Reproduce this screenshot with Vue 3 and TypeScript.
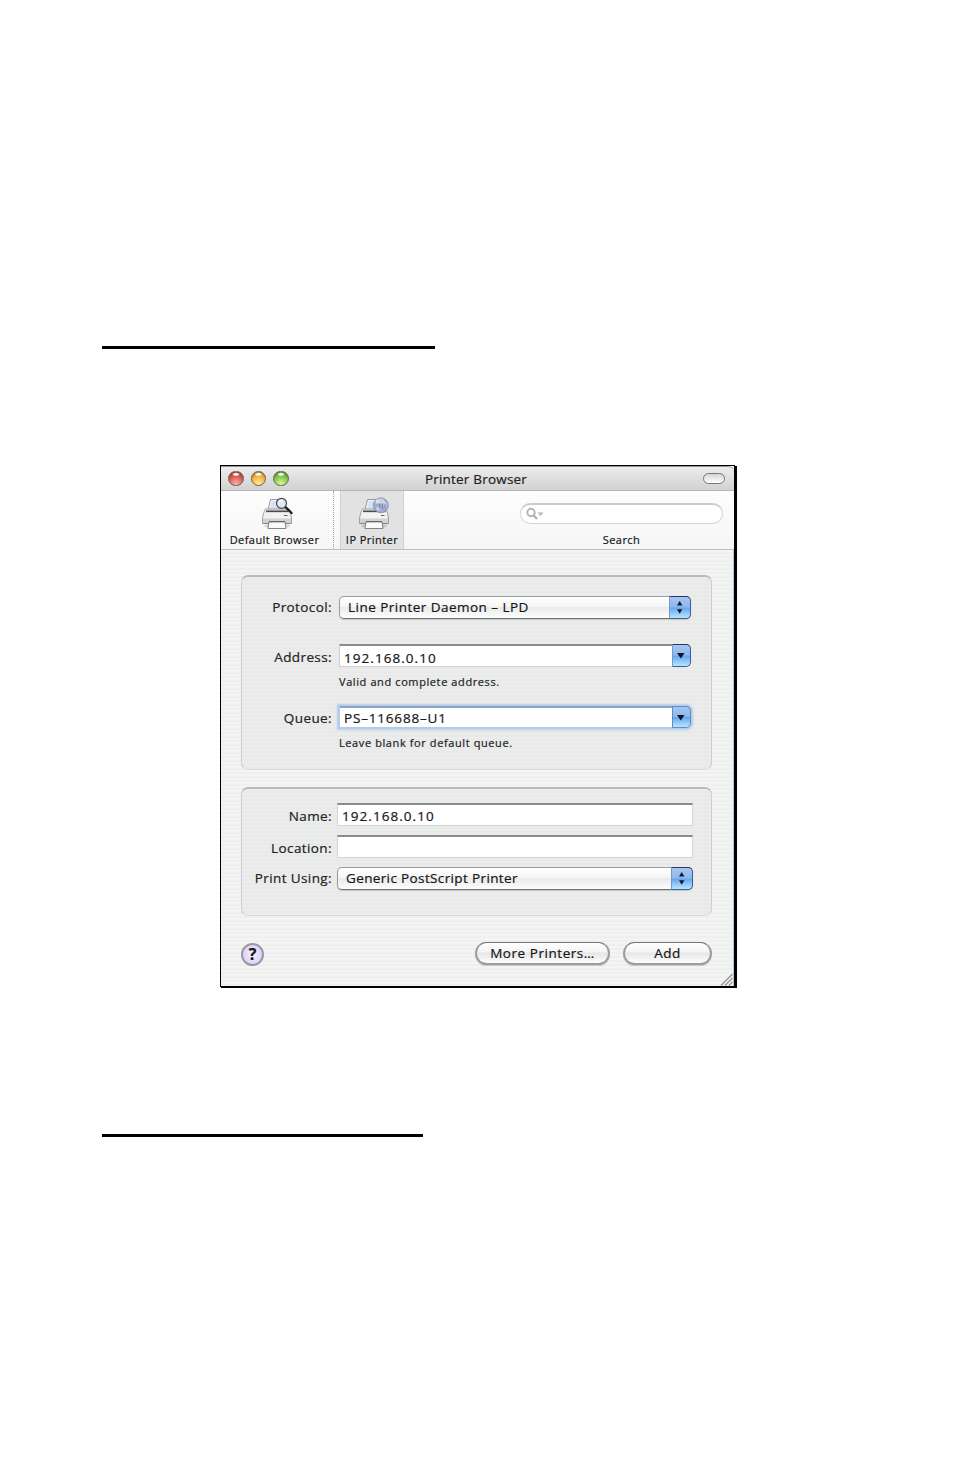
<script setup lang="ts">
interface Tool {
  label: string
  kind: 'search' | 'globe'
  active: boolean
}

const tools: Tool[] = [
  { label: 'Default Browser', kind: 'search', active: false },
  { label: 'IP Printer', kind: 'globe', active: true },
]
const lights = ['red', 'amber', 'green']
</script>

<template>
  <main class="page">
    <div class="rule rule-top"></div>

    <section class="window">
      <header class="titlebar">
        <div class="lights">
          <i v-for="c in lights" :key="c" class="light" :class="c"></i>
        </div>
        <h1 class="title">Printer Browser</h1>
        <i class="pill"></i>
      </header>

      <nav class="toolbar">
        <div v-for="t in tools" :key="t.kind" class="tool" :class="[t.kind, { active: t.active }]">
          <svg class="tool-icon" width="34" height="34" viewBox="0 0 34 34">
            <ellipse cx="17" cy="30" rx="13" ry="2.4" fill="#000" opacity=".13" />
            <path d="M8 14 10.5 3.5H24L25 15Z" fill="#eef3fc" stroke="#8b919b" stroke-width=".9" />
            <path d="M10 14 12 5H22L23 14Z" fill="#d6e1f6" />
            <path d="M4.5 14.5Q4.5 13 6.5 13H27.500Q29.500 13 30 15L31.500 22V27.500H2.500V22Z" fill="#f2f2f0" stroke="#8c8c8c" stroke-width=".8" />
            <path d="M6 15.300H28.500" stroke="#4a4c50" stroke-width="1.7" />
            <path d="M3 22.500H31V27Q31 28 29.500 28H4.500Q3 28 3 27Z" fill="#d2d2d0" />
            <path d="M3 27.500H31" stroke="#858585" stroke-width="1" />
            <path d="M9 25.500H25L26 32.500H8Z" fill="#fbfbfb" stroke="#777" stroke-width=".9" />
            <path d="M9 25.700H25" stroke="#666" stroke-width="1.300" />
            <path d="M24 19.500h3.500" stroke="#666" stroke-width="1" />
            <g v-if="t.kind === 'search'">
              <path d="M25.500 11 31.500 17" stroke="#1d1d1d" stroke-width="2.400" stroke-linecap="round" />
              <circle cx="21.500" cy="7.300" r="5" fill="#dfe7ee" fill-opacity=".9" stroke="#44484c" stroke-width="1.200" />
              <path d="M19 6.500Q20 4.300 22.500 4.500" fill="none" stroke="#fff" stroke-width="1.300" />
            </g>
            <g v-else>
              <circle cx="23.800" cy="9.300" r="7.500" fill="#a3acd0" stroke="#8088a8" stroke-width=".7" />
              <path d="M18 7Q19 4 22 4Q22 7 19.500 8ZM19 12Q21 9 23 12L22 15Q19.500 14.500 19 12ZM26 5Q29 5 30 8L29 12L26.500 10Z" fill="#dde2f3" opacity=".6" />
              <ellipse cx="23" cy="5" rx="4.500" ry="2.500" fill="#fff" opacity=".45" />
              <path d="M22.500 8v4M25.500 8v5M28 8v4" stroke="#7b85ad" stroke-width="1" />
            </g>
          </svg>
          <span class="tool-label">{{ t.label }}</span>
        </div>
        <div class="search-item">
          <div class="search-box">
            <svg width="22" height="14" viewBox="0 0 22 14">
              <circle cx="6" cy="5.500" r="3.700" fill="none" stroke="#b3b5b5" stroke-width="1.900" />
              <path d="M8.800 8.500 12 12" stroke="#b3b5b5" stroke-width="2.400" />
              <path d="M12.500 5.500h6l-3 3.500Z" fill="#b3b5b5" />
            </svg>
          </div>
          <span class="tool-label">Search</span>
        </div>
      </nav>

      <div class="body">
        <div class="group first">
          <div class="row r-protocol">
            <label>Protocol:</label>
            <div class="popup"><span class="t-lpd">Line Printer Daemon – LPD</span>
              <i class="cap"><svg width="22" height="23" viewBox="0 0 22 23"><path d="M8 9.500 10.700 5l2.700 4.500ZM8 13.300h5.400l-2.700 4.500Z" fill="#10182c" /></svg></i>
            </div>
          </div>
          <div class="row r-address">
            <label>Address:</label>
            <div class="combo"><span class="t-ip">192.168.0.10</span>
              <i class="cap"><svg width="19" height="23" viewBox="0 0 19 23"><path d="M5 9h7.500L8.800 14.500Z" fill="#0c1428" /></svg></i>
            </div>
          </div>
          <p class="hint">Valid and complete address.</p>
          <div class="row r-queue">
            <label>Queue:</label>
            <div class="combo focus"><span class="t-ps">PS–116688–U1</span>
              <i class="cap"><svg width="19" height="22" viewBox="0 0 19 22"><path d="M5 9h7.500L8.800 14.500Z" fill="#0c1428" /></svg></i>
            </div>
          </div>
          <p class="hint">Leave blank for default queue.</p>
        </div>

        <div class="group second">
          <div class="row r-name">
            <label>Name:</label>
            <div class="field"><span class="t-ip">192.168.0.10</span></div>
          </div>
          <div class="row r-location">
            <label>Location:</label>
            <div class="field"></div>
          </div>
          <div class="row r-using">
            <label>Print Using:</label>
            <div class="popup"><span class="t-generic">Generic PostScript Printer</span>
              <i class="cap"><svg width="22" height="23" viewBox="0 0 22 23"><path d="M8 9.500 10.700 5l2.700 4.500ZM8 13.300h5.400l-2.700 4.500Z" fill="#10182c" /></svg></i>
            </div>
          </div>
        </div>

        <footer class="footer">
          <button class="help">?</button>
          <button class="btn more"><span>More Printers…</span></button>
          <button class="btn add"><span>Add</span></button>
        </footer>
        <svg class="grip" width="14" height="13" viewBox="0 0 14 13">
          <path d="M1 12.500 12.500 1M5 12.500 12.500 5M9 12.500 12.500 9" stroke="#8e908f" stroke-width="1.100" />
        </svg>
      </div>
    </section>

    <div class="rule rule-bottom"></div>
  </main>
</template>

<style>
body {
  background: #fff;
}
</style>

<style scoped>
.page {
  box-sizing: border-box;
  width: 954px;
  height: 1475px;
  padding-top: 346px;
  overflow: hidden;
  font-family: 'Open Sans', 'Noto Sans', sans-serif;
  font-size: 13.5px;
  color: #222;
  -webkit-text-stroke: 0.2px currentColor;
}
.page * {
  box-sizing: border-box;
}
.rule {
  height: 3px;
  margin-left: 102px;
  background: #000;
}
.rule-top {
  width: 333px;
}
.rule-bottom {
  width: 321px;
  margin-top: 147px;
}
.window {
  display: flex;
  flex-direction: column;
  width: 515px;
  height: 522px;
  margin: 116px 0 0 220px;
  border: 1px solid #000;
  box-shadow: 1px 1px 0 #000, 2px 1px 0 #000;
  background: #f1f2f1;
}
.titlebar {
  display: flex;
  align-items: center;
  justify-content: space-between;
  height: 25px;
  padding: 0 9px 0 7px;
  border-bottom: 1px solid #b4b5b4;
  border-top: 1px solid #8f9798;
  border-top-right-radius: 6px;
  background: linear-gradient(#ecedec, #d0d1d0);
}
.lights {
  display: flex;
  gap: 7px;
  width: 70px;
}
.light {
  width: 15.5px;
  height: 15.5px;
  border-radius: 50%;
  border: 1px solid #6b5f55;
}
.red {
  background: radial-gradient(ellipse 4px 2px at 50% 18%, #fff 40%, transparent), radial-gradient(circle at 50% 90%, #f7b5ac, #d8504b 60%, #8e2221);
}
.amber {
  background: radial-gradient(ellipse 4px 2px at 50% 18%, #fff 40%, transparent), radial-gradient(circle at 50% 90%, #fff09a, #f0ac3c 60%, #a55d0e);
}
.green {
  background: radial-gradient(ellipse 4px 2px at 50% 18%, #fff 40%, transparent), radial-gradient(circle at 50% 90%, #dcfa9a, #78c044 60%, #377010);
}
.title {
  margin: 0 0 0 -1px;
  font-size: 13.5px;
  font-weight: 400;
  line-height: 22px;
  letter-spacing: 0.2px;
  white-space: nowrap;
}
.pill {
  width: 22px;
  height: 11px;
  margin-left: 48px;
  border: 1.5px solid #747776;
  border-radius: 6px;
  background: linear-gradient(#d4d5d5, #fff);
}
.toolbar {
  display: flex;
  height: 59px;
  border-bottom: 1px solid #bdbfbd;
  background: linear-gradient(#fcfdfc, #f5f6f5);
}
.tool {
  display: flex;
  flex-direction: column;
  align-items: center;
  white-space: nowrap;
}
.tool.search {
  width: 113px;
  padding-right: 5px;
  border-right: 1px dotted #a0a1a0;
}
.tool.globe {
  width: 64px;
  margin-left: 6px;
  border: solid #d0d1d0;
  border-width: 0 1px;
  background: #e1e2e1;
}
.tool-icon {
  flex: none;
  margin-top: 5px;
  margin-left: 4px;
}
.tool.globe .tool-icon {
  margin-left: 3px;
}
.tool-label {
  font-size: 11px;
  line-height: 15px;
  margin-top: 2px;
  letter-spacing: 0.45px;
  color: #161616;
}
.search-item {
  display: flex;
  flex-direction: column;
  align-items: center;
  width: 203px;
  margin-left: 116px;
  padding-top: 12px;
}
.search-box {
  width: 203px;
  height: 21px;
  padding: 2px 0 0 4px;
  border: 1px solid #d4d6d4;
  border-top: 2px solid #c9cbc9;
  border-radius: 11px;
  background: #fff;
}
.search-item .tool-label {
  margin-top: 8px;
}
.body {
  position: relative;
  flex: 1;
  padding: 25px 21px 0 20px;
  background: repeating-linear-gradient(#f3f5f3 0 2px, #eeefee 2px 4px);
  border-right: 1px solid #b9c9dc;
}
.group {
  width: 471px;
  border: 1px solid #cdcfcf;
  border-top: 2px solid #b9bbbb;
  border-bottom-color: #d9dbdb;
  border-radius: 7px;
  background: repeating-linear-gradient(#ebecec 0 2px, #e8e9e8 2px 4px);
}
.group.first {
  height: 195px;
  padding-top: 19px;
}
.group.second {
  height: 129px;
  margin-top: 17px;
  padding-top: 14px;
}
.row {
  display: flex;
  align-items: flex-start;
}
.row label {
  flex: none;
  width: 90px;
  margin-right: 7px;
  line-height: 23px;
  letter-spacing: 0.4px;
  text-align: right;
  white-space: nowrap;
}
.second .row label {
  margin-right: 5px;
}
.r-address label,
.r-queue label,
.r-name label,
.r-location label {
  padding-top: 2px;
  margin-bottom: -2px;
}
.r-address {
  margin-top: 25px;
}
.r-queue {
  margin-top: 16px;
}
.r-location {
  margin-top: 9px;
}
.r-using {
  margin-top: 9px;
}
.popup,
.combo,
.field {
  display: flex;
  align-items: center;
  justify-content: space-between;
  width: 352px;
  height: 23px;
  white-space: nowrap;
  line-height: 20px;
  color: #161616;
}
.popup {
  padding-left: 8px;
  border: 1px solid #9b9d9d;
  border-bottom-color: #6f7171;
  border-radius: 5px;
  box-shadow: 0 1px 1px #c5c6c5;
  background: linear-gradient(#fff 0, #f6f6f6 45%, #e9eaea 50%, #fdfdfd);
}
.popup span {
  margin-top: -1px;
}
.combo span {
  margin-top: 3px;
}
.field span {
  margin-top: 2px;
}
.t-lpd {
  letter-spacing: 0.47px;
}
.t-ip {
  letter-spacing: 1.05px;
}
.t-ps {
  letter-spacing: 0.82px;
}
.t-generic {
  letter-spacing: 0.37px;
}
.second .popup,
.second .field {
  width: 356px;
}
.combo {
  padding-left: 4px;
  border: 1px solid #cfd0d0;
  border-top: 2px solid #8a8c8c;
  border-right: 0;
  border-radius: 0 5px 5px 0;
  background: #fff;
}
.field {
  padding-left: 4px;
  border: 1px solid #d4d5d5;
  border-top: 2px solid #8a8c8c;
  background: #fff;
}
.combo.focus {
  height: 22px;
  margin-top: 1px;
  margin-bottom: -1px;
  border: 1px solid #b3cae6;
  border-top: 2px solid #8ba5c6;
  border-right: 0;
  box-shadow: 0 0 2px 1.5px #b4cde9;
}
.combo.focus span {
  margin-top: 1px;
}
.cap {
  flex: none;
  width: 22px;
  height: 23px;
  margin: -1px;
  overflow: hidden;
  border: 1px solid #3a5f9e;
  border-top-color: #27356f;
  border-left-color: #6f9bd2;
  border-radius: 0 5px 5px 0;
  background: linear-gradient(#a9c6ee 0, #8db8ef 48%, #64a6ee 52%, #b9e6ff);
}
.cap svg {
  display: block;
  margin: -1px 0 0 -1px;
}
.combo .cap {
  width: 19px;
  margin: -2px 0 -1px;
}
.combo.focus .cap {
  height: 22px;
  border-color: #5e8cc8;
}
.hint {
  margin: 7px 0 0 97px;
  font-size: 11px;
  line-height: 15px;
  letter-spacing: 0.6px;
  white-space: nowrap;
}
.footer {
  display: flex;
  width: 471px;
  margin-top: 26px;
}
button {
  padding: 0;
  font: inherit;
  color: #161616;
}
.help {
  width: 23px;
  height: 23px;
  margin-top: 1px;
  border: 2px solid #9b98a5;
  border-radius: 50%;
  font-weight: 700;
  font-size: 16px;
  line-height: 19px;
  background: radial-gradient(circle at 50% 50%, #f6eeff, #d6c7f5);
}
.btn {
  height: 23px;
  border: 2px solid #9c9e9e;
  border-top: 1px solid #737575;
  border-radius: 12px;
  box-shadow: 0 1px 1px #c6c7c6;
  line-height: 19px;
  letter-spacing: 0.55px;
  background: linear-gradient(#fff 0, #f4f4f4 45%, #e5e6e6 50%, #fdfdfd);
}
.more {
  width: 135px;
  margin-left: 211px;
}
.add {
  width: 89px;
  margin-left: 13px;
}
.grip {
  position: absolute;
  right: -1px;
  bottom: 0;
}
</style>
